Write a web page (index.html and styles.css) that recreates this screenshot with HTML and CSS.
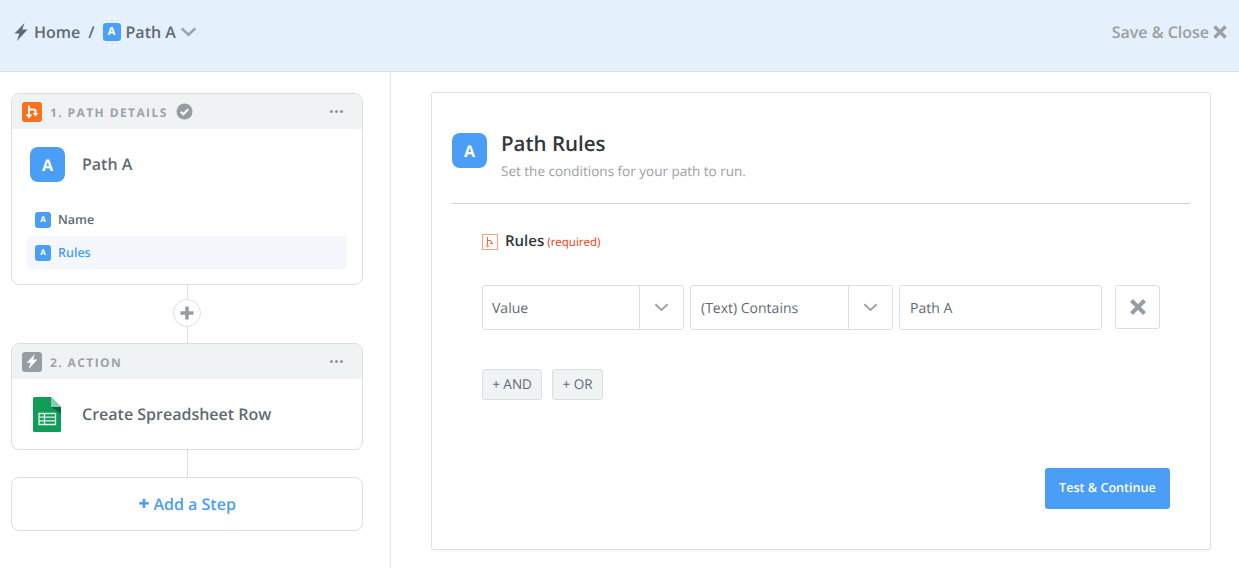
FILE: index.html
```html
<!DOCTYPE html>
<html lang="en">
<head>
<meta charset="utf-8">
<title>Path A</title>
<link rel="stylesheet" href="styles.css">
</head>
<body>
<header class="topbar">
  <nav class="crumbs">
    <svg class="bolt" viewBox="0 0 14 18" width="14" height="18"><path d="M10.500 0 .5 10.600h4.800L3 18l10.500-11.400H8.300z" fill="#5f6a72"/></svg>
    <span class="crumb">Home</span>
    <span class="slash">/</span>
    <span class="badge badge-18">A</span>
    <span class="crumb">Path A</span>
    <svg class="caret" viewBox="0 0 18 11" width="17" height="10"><path d="M1.500 1.500 9 8.500l7.500-7" fill="none" stroke="#9ba3a8" stroke-width="2.800"/></svg>
  </nav>
  <div class="save">
    <span>Save &amp; Close</span>
    <svg viewBox="0 0 14 14" width="14" height="14"><path d="M1.500 1.500l11 11M12.500 1.500l-11 11" stroke="#9a9f9f" stroke-width="3.400" fill="none"/></svg>
  </div>
</header>
<div class="layout">
  <aside class="sidebar">
    <section class="card">
      <div class="card-head">
        <span class="step-icon orange">
          <svg viewBox="0 0 20 20" width="20" height="20"><path d="M7 3.500V14M7 7.500h4.500q2 0 2 2V12" fill="none" stroke="#fff" stroke-width="2"/><path d="M3.800 12.500 7 16.800l3.200-4.300zM10.800 11l2.700 3.600 2.700-3.600z" fill="#fff"/></svg>
        </span>
        <span class="step-title">1. PATH DETAILS</span>
        <svg class="check" viewBox="0 0 18 18" width="17" height="17"><circle cx="9" cy="9" r="8.500" fill="#969ea3"/><path d="M5 9.300l2.800 2.700L13 6.500" fill="none" stroke="#fff" stroke-width="2.200"/></svg>
        <span class="dots"><i></i><i></i><i></i></span>
      </div>
      <div class="card-main">
        <span class="badge badge-35">A</span>
        <span class="card-name">Path A</span>
      </div>
      <ul class="sub">
        <li class="sub-row"><span class="badge badge-16">A</span>Name</li>
        <li class="sub-row active"><span class="badge badge-16">A</span>Rules</li>
      </ul>
    </section>
    <div class="link link-plus">
      <span class="plus">
        <svg viewBox="0 0 14 14" width="14" height="14"><path d="M7 .5v13M.5 7h13" stroke="#969ea3" stroke-width="3.600" fill="none"/></svg>
      </span>
    </div>
    <section class="card">
      <div class="card-head">
        <span class="step-icon grey">
          <svg viewBox="0 0 14 18" width="12" height="15"><path d="M10.500 0 .5 10.600h4.800L3 18l10.500-11.400H8.300z" fill="#fff"/></svg>
        </span>
        <span class="step-title">2. ACTION</span>
        <span class="dots"><i></i><i></i><i></i></span>
      </div>
      <div class="card-main action-main">
        <svg class="sheet" viewBox="0 0 28 35" width="28" height="35">
          <path d="M1.500 0H18l10 10v23.500a1.500 1.500 0 0 1-1.500 1.500h-25A1.500 1.500 0 0 1 0 33.500v-32A1.500 1.500 0 0 1 1.500 0z" fill="#0f9d58"/>
          <path d="M18 0l10 10H18z" fill="#87ceac"/>
          <path d="M18 10h10v7z" fill="#0a6b3c"/>
          <path d="M6 16.500h16.500v11H6zM6 20.200h16.500M6 23.900h16.500M11.500 16.500v11" fill="none" stroke="#e6f4ec" stroke-width="1.300"/>
        </svg>
        <span class="card-name">Create Spreadsheet Row</span>
      </div>
    </section>
    <div class="link link-add"></div>
    <button class="add-step"><span class="add-plus">+</span> Add a Step</button>
  </aside>
  <main class="content">
    <section class="panel">
      <div class="panel-head">
        <span class="badge badge-35">A</span>
        <div class="panel-titles">
          <h1>Path Rules</h1>
          <p>Set the conditions for your path to run.</p>
        </div>
      </div>
      <div class="form">
        <div class="label-row">
          <span class="mini-icon">
            <svg viewBox="0 0 14 14" width="14" height="14"><path d="M4.500 2v8M4.500 5.500H7q1.500 0 1.500 1.500v1M7 8.500h3" fill="none" stroke="#f26a2e" stroke-width="1"/><path d="M2.500 10.500h4L4.500 12.500z" fill="#f26a2e"/></svg>
          </span>
          <span class="label">Rules</span>
          <span class="required">(required)</span>
        </div>
        <div class="rule">
          <div class="select sel-a"><span class="select-text">Value</span><span class="select-arrow"><svg viewBox="0 0 18 11" width="15" height="9"><path d="M1.500 1.500 9 8.500l7.500-7" fill="none" stroke="#9ba3a8" stroke-width="2.400"/></svg></span></div>
          <div class="select sel-b"><span class="select-text">(Text) Contains</span><span class="select-arrow"><svg viewBox="0 0 18 11" width="15" height="9"><path d="M1.500 1.500 9 8.500l7.500-7" fill="none" stroke="#9ba3a8" stroke-width="2.400"/></svg></span></div>
          <div class="select sel-c"><span class="select-text">Path A</span></div>
          <span class="remove"><svg viewBox="0 0 16 16" width="16" height="16"><path d="M1.500 1.500l13 13M14.500 1.500l-13 13" stroke="#969ea3" stroke-width="4" fill="none"/></svg></span>
        </div>
        <div class="logic">
          <button class="ghost">+ AND</button>
          <button class="ghost">+ OR</button>
        </div>
        <div class="actions">
          <button class="primary">Test &amp; Continue</button>
        </div>
      </div>
    </section>
  </main>
</div>
</body>
</html>
```
FILE: styles.css
```css
* { box-sizing: border-box; }
html, body { margin: 0; padding: 0; }
body {
  width: 1239px;
  height: 568px;
  overflow: hidden;
  background: #fff;
  font-family: "Open Sans", "Liberation Sans", sans-serif;
  color: #5f6a72;
  text-rendering: geometricPrecision;
}
ul { list-style: none; margin: 0; padding: 0; }
h1, p { margin: 0; }
button { font-family: inherit; cursor: pointer; text-rendering: geometricPrecision; }

.topbar {
  height: 72px;
  background: #e5f0fd;
  border-bottom: 1px solid #d8dfe5;
  display: flex;
  align-items: center;
  justify-content: space-between;
  padding: 0 12px 8px 14px;
}
.crumbs { display: flex; align-items: center; }
.bolt { margin-right: 6px; }
.crumb { font-size: 16px; font-weight: 600; color: #5f6a72; line-height: 20px; }
.slash { font-size: 16px; font-weight: 600; margin: 0 8px 0 8px; color: #5f6a72; }
.caret { margin-left: 4px; margin-top: 1px; }
.save { display: flex; align-items: center; gap: 4px; font-size: 16px; font-weight: 600; color: #9a9f9f; }

.badge {
  display: inline-flex;
  align-items: center;
  justify-content: center;
  background: #4a9ef5;
  color: #fff;
  font-weight: 700;
  flex: none;
}
.badge-18 { width: 18px; height: 18px; border-radius: 3px; font-size: 11px; margin-right: 5px; }
.badge-35 { width: 35px; height: 35px; border-radius: 8px; font-size: 16px; }
.badge-16 { width: 16px; height: 16px; border-radius: 3px; font-size: 8px; margin-right: 7px; }

.layout { display: flex; height: 496px; }
.sidebar {
  width: 391px;
  flex: none;
  border-right: 1px solid #e2e5e8;
  padding: 21px 27px 0 11px;
}
.card {
  border: 1px solid #dcdfe2;
  border-radius: 8px;
  background: #fff;
  overflow: hidden;
}
.card-head {
  height: 35px;
  background: #f0f3f4;
  display: flex;
  align-items: center;
  padding: 0 19px 0 10px;
}
.step-icon {
  width: 20px;
  height: 20px;
  border-radius: 3px;
  display: flex;
  align-items: center;
  justify-content: center;
  margin-right: 8px;
  flex: none;
}
.orange { background: #f9701d; }
.grey { background: #969ea3; }
.step-title { font-size: 12px; font-weight: 700; letter-spacing: 1.400px; color: #9ca3a6; padding-top: 1px; }
.check { margin-left: 8px; }
.dots { margin-left: auto; display: flex; gap: 2px; }
.dots i { width: 3px; height: 3px; border-radius: 50%; background: #8f979c; display: block; }

.card-main { display: flex; align-items: center; padding: 18px 18px 0; height: 53px; }
.card-name { font-size: 16px; font-weight: 600; color: #5f6a72; margin-left: 17px; margin-top: -2px; }
.action-main { height: 70px; padding: 0 18px 0 21px; }
.action-main .card-name { margin-left: 21px; margin-top: 0; }
.sheet { flex: none; }

.sub { padding: 21px 15px 15px; }
.sub-row {
  display: flex;
  align-items: center;
  height: 33px;
  padding-left: 8px;
  font-size: 12.500px;
  font-weight: 600;
  color: #5f6a72;
  border-radius: 4px;
}
.sub-row.active { background: #f4f8fd; color: #4a9ef5; }

.link { display: flex; justify-content: center; position: relative; }
.link::before {
  content: "";
  position: absolute;
  top: 0;
  bottom: 0;
  left: 50%;
  width: 1px;
  background: #dcdfe2;
}
.link-plus { height: 58px; align-items: center; padding-bottom: 2px; }
.link-add { height: 27px; }
.plus {
  position: relative;
  width: 28px;
  height: 28px;
  border-radius: 50%;
  border: 1px solid #dce1e5;
  background: #fff;
  display: flex;
  align-items: center;
  justify-content: center;
}
.add-step {
  width: 352px;
  height: 54px;
  display: block;
  border: 1px solid #dcdfe2;
  border-radius: 8px;
  background: #fff;
  color: #4a9ef5;
  font-size: 16px;
  font-weight: 600;
  padding: 0;
}
.add-plus { font-weight: 800; font-size: 19px; line-height: 16px; }

.content { flex: 1; padding: 20px 28px 0 40px; }
.panel {
  width: 780px;
  height: 458px;
  background: #fff;
  border: 1px solid #dfe3e7;
  border-radius: 3px;
  box-shadow: 0 1px 2px rgba(0, 0, 0, 0.05);
  padding: 40px 20px 0;
}
.panel-head {
  display: flex;
  height: 71px;
  border-bottom: 1px solid #cfd2d5;
}
.panel-titles { margin-left: 14px; }
.panel-titles h1 {
  font-size: 20.500px;
  font-weight: 600;
  line-height: 22px;
  color: #32373b;
}
.panel-titles p {
  font-size: 13.500px;
  line-height: 18px;
  color: #9aa1a6;
  margin-top: 7px;
}
.form { padding: 30px 20px 0 30px; }
.label-row { display: flex; align-items: center; height: 16px; }
.mini-icon {
  width: 16px;
  height: 16px;
  border: 1px solid #f8a07c;
  display: flex;
  align-items: center;
  justify-content: center;
  margin-right: 7px;
}
.label { font-size: 15px; font-weight: 600; color: #32373b; margin-top: -3px; }
.required { font-size: 11.500px; font-weight: 400; color: #f4390e; margin-left: 3px; }

.rule { display: flex; align-items: flex-start; margin-top: 35px; height: 45px; }
.select {
  height: 45px;
  border: 1px solid #dcdfe2;
  border-radius: 3px;
  display: flex;
  align-items: center;
  font-size: 14px;
  color: #5f6a72;
  background: #fff;
}
.sel-a { width: 202px; }
.sel-b { width: 203px; margin-left: 6px; }
.sel-c { width: 203px; margin-left: 6px; }
.select-text { flex: 1; padding: 1px 0 0 9px; }
.sel-b .select-text { padding-left: 10px; }
.sel-c .select-text { padding-left: 10px; }
.select-arrow {
  width: 44px;
  height: 100%;
  border-left: 1px solid #dcdfe2;
  display: flex;
  align-items: center;
  justify-content: center;
}
.remove {
  width: 45px;
  height: 44px;
  margin-left: 13px;
  border: 1px solid #dcdfe2;
  border-radius: 3px;
  display: flex;
  align-items: center;
  justify-content: center;
}
.logic { display: flex; gap: 10px; margin-top: 39px; }
.ghost {
  width: 60px;
  height: 31px;
  padding: 0 0 2px;
  background: #f0f3f4;
  border: 1px solid #dcdfe2;
  border-radius: 3px;
  font-size: 13.500px;
  color: #5f6a72;
}
.ghost + .ghost { width: 51px; }
.actions { display: flex; justify-content: flex-end; margin-top: 68px; }
.primary {
  width: 125px;
  height: 41px;
  background: #4a9ef5;
  border: 0;
  border-radius: 3px;
  color: #fff;
  font-size: 12.600px;
  font-weight: 600;
  padding: 0 0 2px;
}
```
